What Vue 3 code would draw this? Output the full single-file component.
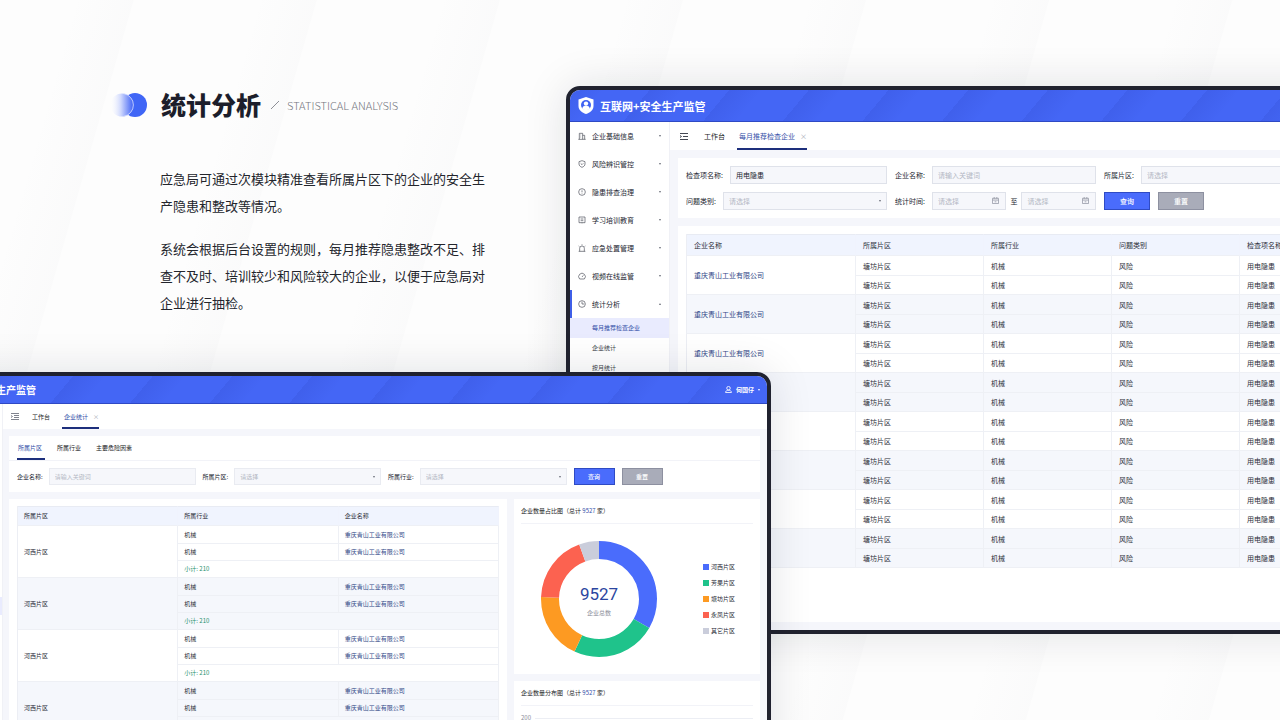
<script setup>
const intro = [
  '应急局可通过次模块精准查看所属片区下的企业的安全生产隐患和整改等情况。',
  '系统会根据后台设置的规则，每月推荐隐患整改不足、排查不及时、培训较少和风险较大的企业，以便于应急局对企业进行抽检。',
]

const menu = [
  { icon: 'building', label: '企业基础信息' },
  { icon: 'shield', label: '风险辨识管控' },
  { icon: 'alert', label: '隐患排查治理' },
  { icon: 'book', label: '学习培训教育' },
  { icon: 'siren', label: '应急处置管理' },
  { icon: 'gauge', label: '视频在线监管' },
  {
    icon: 'pie',
    label: '统计分析',
    open: true,
    children: ['每月推荐检查企业', '企业统计', '按月统计'],
  },
]

const company = '重庆青山工业有限公司'
const checkGroups = Array.from({ length: 8 }, (_, i) => ({
  company: i < 3 ? company : '',
  rows: [
    ['塘坊片区', '机械', '风险', '用电隐患'],
    ['塘坊片区', '机械', '风险', '用电隐患'],
  ],
}))
const areaGroups = Array.from({ length: 4 }, () => ({
  area: '河西片区',
  rows: ['机械', '机械'],
  total: 210,
}))

const areaTabs = ['所属片区', '所属行业', '主要危险因素']

const slices = [
  { label: '河西片区', color: '#4a6cfc', from: 0, to: 120 },
  { label: '芳果片区', color: '#1fc38b', from: 120, to: 205 },
  { label: '塘坊片区', color: '#fd9a22', from: 205, to: 272 },
  { label: '永凤片区', color: '#fc6250', from: 272, to: 340 },
  { label: '其它片区', color: '#cacddb', from: 340, to: 360 },
]
</script>

<template>
  <main class="stage">
    <section class="intro">
      <header class="intro-head">
        <svg class="mark" viewBox="0 0 38 24" aria-hidden="true">
          <defs>
            <linearGradient id="markFade" x1="0" x2="1">
              <stop offset="0" stop-color="#fff" stop-opacity="0.2" />
              <stop offset="0.45" stop-color="#cfd8fd" />
              <stop offset="1" stop-color="#3d60f5" />
            </linearGradient>
          </defs>
          <circle cx="25" cy="12" r="12" fill="#4066f6" />
          <circle cx="12" cy="12" r="11.5" fill="url(#markFade)" />
          <path d="M14 .7a11.5 11.5 0 0 1 0 22.6" fill="none" stroke="#dfe6ff" stroke-width=".8" />
        </svg>
        <h1>统计分析</h1>
        <svg class="slash" viewBox="0 0 8 8" aria-hidden="true"><path d="M0 8 8 0" /></svg>
        <span class="en">STATISTICAL ANALYSIS</span>
      </header>
      <p v-for="text in intro" :key="text">{{ text }}</p>
    </section>

    <section class="window back">
      <header class="bar">
        <svg class="logo" viewBox="0 0 16 17" aria-hidden="true">
          <path fill="#fff" d="M8 0 15.500 2.600V9c0 4-3.500 6.600-7.500 8C4 15.600.5 13 .5 9V2.600z" />
          <circle cx="8" cy="8" r="5" fill="#4062f2" />
          <circle cx="8" cy="6.600" r="2.200" fill="#fff" />
          <path fill="#fff" d="M4.200 11.500c.4-2 1.800-2.700 3.800-2.700s3.400.7 3.800 2.700C10.500 13.600 5.500 13.600 4.200 11.500z" />
        </svg>
        <strong>互联网+安全生产监管</strong>
      </header>
      <div class="body">
        <nav class="side">
          <template v-for="item in menu" :key="item.label">
            <button type="button" class="menu" :class="{ open: item.open }">
              <svg viewBox="0 0 12 12" aria-hidden="true">
                <g v-if="item.icon === 'building'"><path d="M2 11V2h5v9M7 5h3v6M.5 11h11M4 4v1M4 7v1" /></g>
                <g v-else-if="item.icon === 'shield'"><path d="M6 1l4.500 1.500V6c0 2.500-2 4-4.500 5-2.500-1-4.500-2.500-4.500-5V2.500zM4 5l2 2 2-2" /></g>
                <g v-else-if="item.icon === 'alert'"><circle cx="6" cy="6" r="5" /><path d="M6 3.500v3M6 8v.8" /></g>
                <g v-else-if="item.icon === 'book'"><path d="M1.500 1.500h9v8.500h-9zM4 4.500h4M4 7h4M6 10v1" /></g>
                <g v-else-if="item.icon === 'siren'"><path d="M2.500 11V6.500a3.500 3.500 0 0 1 7 0V11M1 11h10M6 .5v1.500M1 3l1.200 1M11 3 9.800 4" /></g>
                <g v-else-if="item.icon === 'gauge'"><path d="M2.500 10.500a5 5 0 1 1 7 0zM6 7.500 8 5" /></g>
                <g v-else><circle cx="6" cy="6" r="5" /><path d="M6 2.500V6h3.500" /></g>
              </svg>
              <span>{{ item.label }}</span>
              <i class="caret" :class="{ up: item.open }"></i>
            </button>
            <a
              v-for="(child, i) in item.children || []"
              :key="child"
              href="#"
              class="sub"
              :class="{ on: i === 0 }"
            >{{ child }}</a>
          </template>
        </nav>
        <div class="content">
          <nav class="tabs">
            <svg class="fold" viewBox="0 0 8 7" aria-hidden="true"><path d="M0 .5h8M3 3.500h5M0 6.500h8M0 2.500l1.500 1L0 4.500" /></svg>
            <a href="#">工作台</a>
            <a href="#" class="on">每月推荐检查企业<i class="x">×</i></a>
          </nav>
          <form class="panel filters" @submit.prevent>
            <div class="field">
              <label for="item-name">检查项名称:</label>
              <input id="item-name" value="用电隐患" />
            </div>
            <div class="field">
              <label for="ent-name">企业名称:</label>
              <input id="ent-name" placeholder="请输入关键词" />
            </div>
            <div class="field">
              <label for="area">所属片区:</label>
              <span class="pick"><select id="area"><option>请选择</option></select></span>
            </div>
            <div class="field first">
              <label for="kind">问题类别:</label>
              <span class="pick"><select id="kind"><option>请选择</option></select><i class="caret"></i></span>
            </div>
            <div class="field">
              <label for="date-from">统计时间:</label>
              <span class="date">
                <input id="date-from" placeholder="请选择" />
                <svg viewBox="0 0 8 8" aria-hidden="true"><path d="M.5 1.500h7v6h-7zM.5 3.500h7M2.500 0v2M5.500 0v2M3 5.500h2" /></svg>
              </span>
              <label for="date-to" class="to">至</label>
              <span class="date">
                <input id="date-to" placeholder="请选择" />
                <svg viewBox="0 0 8 8" aria-hidden="true"><path d="M.5 1.500h7v6h-7zM.5 3.500h7M2.500 0v2M5.500 0v2M3 5.500h2" /></svg>
              </span>
            </div>
            <div class="actions">
              <button type="submit" class="primary">查询</button>
              <button type="reset" class="plain">重置</button>
            </div>
          </form>
          <div class="panel sheet">
            <table>
              <colgroup><col class="c-name" /><col /><col /><col /><col class="c-rest" /></colgroup>
              <thead>
                <tr><th>企业名称</th><th>所属片区</th><th>所属行业</th><th>问题类别</th><th>检查项名称</th></tr>
              </thead>
              <tbody v-for="(g, gi) in checkGroups" :key="gi">
                <tr v-for="(row, ri) in g.rows" :key="ri">
                  <td v-if="ri === 0" rowspan="2"><a v-if="g.company" href="#">{{ g.company }}</a></td>
                  <td v-for="cell in row" :key="cell">{{ cell }}</td>
                </tr>
              </tbody>
            </table>
          </div>
        </div>
      </div>
    </section>

    <section class="window front">
      <header class="bar">
        <strong>互联网+安全生产监管</strong>
        <button type="button" class="user">
          <svg viewBox="0 0 8 8" aria-hidden="true"><circle cx="4" cy="2.500" r="2" /><path d="M.7 7.500c0-2 1.500-2.600 3.300-2.600s3.300.6 3.300 2.600z" /></svg>
          何国仔
          <i class="caret"></i>
        </button>
      </header>
      <div class="body">
        <div class="side"><span class="here"></span></div>
        <div class="content">
          <nav class="tabs">
            <svg class="fold" viewBox="0 0 8 7" aria-hidden="true"><path d="M0 .5h8M3 2.500h5M3 4.500h5M0 6.500h8M0 2.500l1.500 1L0 4.500" /></svg>
            <a href="#">工作台</a>
            <a href="#" class="on">企业统计<i class="x">×</i></a>
          </nav>
          <form class="panel search" @submit.prevent>
            <div class="inner-tabs">
              <a v-for="(t, i) in areaTabs" :key="t" href="#" :class="{ on: i === 0 }">{{ t }}</a>
            </div>
            <div class="filters">
              <div class="field">
                <label for="f-name">企业名称:</label>
                <input id="f-name" placeholder="请输入关键词" />
              </div>
              <div class="field">
                <label for="f-area">所属片区:</label>
                <span class="pick"><select id="f-area"><option>请选择</option></select><i class="caret"></i></span>
              </div>
              <div class="field">
                <label for="f-trade">所属行业:</label>
                <span class="pick"><select id="f-trade"><option>请选择</option></select><i class="caret"></i></span>
              </div>
              <div class="actions">
                <button type="submit" class="primary">查询</button>
                <button type="reset" class="plain">重置</button>
              </div>
            </div>
          </form>
          <div class="split">
            <div class="panel sheet">
              <table>
                <thead>
                  <tr><th>所属片区</th><th>所属行业</th><th>企业名称</th></tr>
                </thead>
                <tbody v-for="(g, gi) in areaGroups" :key="gi">
                  <tr v-for="(row, ri) in g.rows" :key="ri">
                    <td v-if="ri === 0" rowspan="3">{{ g.area }}</td>
                    <td>{{ row }}</td>
                    <td><a href="#">{{ company }}</a></td>
                  </tr>
                  <tr><td colspan="2" class="sum">小计: {{ g.total }}</td></tr>
                </tbody>
              </table>
            </div>
            <div class="charts">
              <article class="panel card">
                <h2>企业数量占比图（总计 <b>9527</b> 家）</h2>
                <div class="share">
                  <div class="donut">
                    <svg viewBox="0 0 116 116" aria-hidden="true">
                      <circle
                        v-for="s in slices"
                        :key="s.label"
                        cx="58"
                        cy="58"
                        r="49"
                        pathLength="360"
                        :stroke="s.color"
                        :stroke-dasharray="`${s.to - s.from} 360`"
                        :stroke-dashoffset="-s.from"
                      />
                    </svg>
                    <div class="total"><b>9527</b><span>企业总数</span></div>
                  </div>
                  <ul>
                    <li v-for="s in slices" :key="s.label">
                      <i :style="{ background: s.color }"></i>{{ s.label }}
                    </li>
                  </ul>
                </div>
              </article>
              <article class="panel card">
                <h2>企业数量分布图（总计 <b>9527</b> 家）</h2>
                <div class="axis"><span>200</span><hr /></div>
              </article>
            </div>
          </div>
        </div>
      </div>
    </section>
  </main>
</template>

<style>
body {
  margin: 0;
}
</style>

<style scoped>
* {
  box-sizing: border-box;
}
.stage {
  position: relative;
  min-height: 100vh;
  overflow: hidden;
  background:
    repeating-linear-gradient(106deg, rgba(120, 124, 140, 0) 0 70px, rgba(120, 124, 140, 0.02) 128px, rgba(120, 124, 140, 0) 129px 176px),
    #fdfdfd;
  font-family: "Noto Sans CJK SC", sans-serif;
  color: #22252f;
}
a {
  color: inherit;
  text-decoration: none;
}
i {
  font-style: normal;
}
button,
input,
select {
  font: inherit;
  margin: 0;
}

/* intro copy */
.intro {
  padding: 88px 0 0 110px;
}
.intro-head {
  display: flex;
  align-items: center;
  height: 34px;
  margin-bottom: 43px;
}
.mark {
  width: 38px;
  height: 24px;
  margin-right: 13px;
}
h1 {
  margin: 0;
  padding-bottom: 3px;
  font-size: 25px;
  line-height: 34px;
  font-weight: 900;
  color: #1c1e2b;
}
.slash {
  width: 8px;
  height: 8px;
  margin: 0 8px 0 10px;
  stroke: #8d8f96;
}
.en {
  font-size: 11px;
  line-height: 16px;
  font-weight: 300;
  color: #75777f;
}
.intro p {
  width: 334px;
  margin: 0 0 16px 50px;
  font-size: 13px;
  line-height: 27px;
  color: #23252c;
}

/* windows */
.window {
  position: absolute;
  display: flex;
  flex-direction: column;
  overflow: hidden;
  border: 4px solid #20222f;
  border-radius: 14px;
  background: #f5f6fb;
  box-shadow: 0 0 44px rgba(20, 22, 40, 0.12);
}
.back {
  top: 86px;
  left: 566px;
  right: -254px;
  font-size: 7px;
  line-height: 10px;
}
.front {
  top: 372px;
  left: -90px;
  right: 509px;
  bottom: -40px;
  font-size: 6px;
  line-height: 10px;
}
.bar {
  flex: none;
  display: flex;
  align-items: center;
  height: 32px;
  padding: 0 8px;
  border-bottom: 1px solid #2f49c4;
  background:
    repeating-linear-gradient(130deg, rgba(18, 32, 140, 0.09) 0, rgba(18, 32, 140, 0) 26px 61px),
    #4466f5;
  color: #fff;
  font-size: 11px;
}
.front .bar {
  height: 28px;
  padding: 0 7px 0 26px;
  justify-content: space-between;
  font-size: 10px;
}
.logo {
  width: 16px;
  height: 17px;
  margin-right: 6px;
}
.user {
  display: flex;
  align-items: center;
  padding: 0;
  border: 0;
  background: none;
  color: #fff;
  font-size: 6px;
  font-weight: 700;
  line-height: 10px;
}
.user svg {
  width: 7px;
  height: 7px;
  margin-right: 4px;
  fill: none;
  stroke: #fff;
}
.user .caret {
  margin-left: 4px;
}
.caret {
  flex: none;
  border: 1px solid transparent;
  border-top: 2px solid currentColor;
  border-bottom-width: 0;
}
.caret.up {
  border-top-width: 0;
  border-bottom: 2px solid currentColor;
}
.body {
  flex: 1;
  display: flex;
}
.side {
  flex: none;
  width: 100px;
  border-right: 1px solid #f0f1f6;
  background: #fff;
}
.front .side {
  width: 89px;
}
.here {
  display: block;
  height: 18px;
  margin-top: 193px;
  background: #e9ebfe;
}
.menu {
  display: flex;
  align-items: center;
  width: 100%;
  height: 28px;
  padding: 0 8px;
  border: 0;
  background: none;
  color: #22252f;
  line-height: 10px;
  text-align: left;
}
.menu.open {
  box-shadow: inset 2px 0 #3f5fe8;
}
.menu svg {
  width: 8px;
  height: 8px;
  margin-right: 6px;
  fill: none;
  stroke: #4a4d58;
}
.menu span {
  flex: 1;
}
.menu .caret {
  color: #6a6d78;
}
.sub {
  display: block;
  padding-left: 22px;
  font-size: 6px;
  line-height: 20px;
  color: #3c3f4a;
}
.sub.on {
  background: #e9ebfe;
  color: #3450a8;
}
.content {
  flex: 1;
  min-width: 0;
  display: flex;
  flex-direction: column;
}
.tabs {
  display: flex;
  gap: 12px;
  height: 28px;
  padding: 0 10px;
  background: #fff;
}
.front .tabs {
  padding: 0 8px;
  height: 25px;
}
.fold {
  align-self: center;
  width: 8px;
  height: 7px;
  margin-right: 3px;
  fill: none;
  stroke: #454853;
}
.front .fold {
  margin-right: 0;
  stroke: #80838e;
}
.tabs a,
.inner-tabs a {
  display: flex;
  align-items: center;
  border-bottom: 2px solid transparent;
  padding-top: 2px;
}
.tabs .on {
  gap: 5px;
  padding-left: 2px;
}
.tabs .on,
.inner-tabs .on {
  border-bottom-color: #1d2f7c;
  color: #3450a8;
}
.x {
  color: #a3a6b2;
}
.tabs a:nth-of-type(1) {
  margin-left: 1px;
  color: #191b24;
}
.panel {
  background: #fff;
}
.content > .panel {
  margin: 8px 8px 0;
}
.front .content > .panel {
  margin: 7px 7px 0 6px;
}
.filters {
  display: grid;
  grid-template-columns: repeat(4, 1fr);
  gap: 8px;
  padding: 8px;
}
.search .filters {
  gap: 7px;
  padding: 7px 8px;
}
.field {
  display: flex;
  align-items: center;
  gap: 7px;
  min-width: 0;
}
.front .field {
  gap: 6px;
}
.field.first {
  grid-column: 1;
}
.field > input,
.pick,
.date {
  flex: 1;
  min-width: 0;
}
.pick,
.date {
  display: flex;
  position: relative;
}
.to {
  margin: 0 -3px;
}
input,
select {
  width: 100%;
  height: 18px;
  padding: 0 5px;
  border: 1px solid #dfe2ea;
  border-radius: 0;
  background: #f6f7fb;
  color: #22252f;
  appearance: none;
  outline: 0;
}
.front input,
.front select {
  height: 17px;
  border-color: #e9ebf1;
}
select,
input::placeholder {
  color: #b4b8c4;
  opacity: 1;
}
.pick .caret {
  position: absolute;
  right: 6px;
  top: 8px;
  color: #6a6d78;
}
.date svg {
  position: absolute;
  right: 7px;
  top: 5px;
  width: 7px;
  height: 7px;
  fill: none;
  stroke: #9c9fab;
}
.actions {
  display: flex;
  gap: 8px;
}
.front .actions {
  gap: 7px;
}
.actions button {
  width: 46px;
  height: 18px;
  padding: 0;
  border: 1px solid #2f4bc4;
  background: #4a6cfc;
  color: #fff;
  font-weight: 500;
  line-height: 10px;
}
.front .actions button {
  width: 41px;
  height: 17px;
}
.actions .plain {
  border-color: #8d90a0;
  background: #a9acb9;
}

/* tables */
.sheet {
  padding: 8px;
}
.front .sheet {
  padding: 7px 8px;
}
.back .sheet {
  min-height: 396px;
  margin-bottom: 8px;
}
table {
  width: 100%;
  table-layout: fixed;
  border-spacing: 0;
  border: 1px solid #eceef4;
  border-width: 0 0 0 1px;
}
col {
  width: 128px;
}
.c-name {
  width: 169px;
}
.c-rest {
  width: auto;
}
th,
td {
  height: 19px;
  padding: 0 7px;
  border: 1px solid #eef0f5;
  border-width: 0 1px 1px 0;
  text-align: left;
  font-weight: 400;
  color: #2b2e39;
}
.back td {
  height: 20px;
}
.back tr:nth-child(2) td {
  height: 19px;
}
th {
  height: 22px;
  border-right-color: #f0f3fd;
  border-top: 1px solid #e8ebf3;
  background: #f0f4fe;
}
.front th {
  height: 20px;
  padding: 0 6px;
}
.front td {
  height: 17px;
  padding: 0 6px;
}
.front tr:first-child td:not([rowspan]) {
  height: 18px;
}
tbody:nth-of-type(even) td {
  background: #f5f7fc;
}
td a {
  color: #2f4786;
}
td.sum {
  color: #1f8f6c;
}

/* statistics window */
.inner-tabs {
  display: flex;
  gap: 11px;
  height: 25px;
  padding: 0 8px;
  border-bottom: 1px solid #f2f3f8;
  color: #191b24;
}
.inner-tabs a {
  padding-left: 1px;
  padding-right: 3px;
}
.split {
  flex: 1;
  display: grid;
  grid-template-columns: 498fr 246fr;
  gap: 7px;
  padding: 7px 7px 0 6px;
}
.charts {
  display: flex;
  flex-direction: column;
  gap: 7px;
}
.card {
  min-height: 175px;
}
h2 {
  margin: 0 7px;
  font-size: 6px;
  line-height: 24px;
  font-weight: 400;
  border-bottom: 1px solid #f2f3f8;
  color: #191b24;
}
h2 b {
  font-weight: 400;
  color: #3450a8;
}
.share {
  display: flex;
  align-items: center;
  justify-content: space-between;
  padding: 17px 25px 16px 27px;
}
.donut {
  position: relative;
  width: 116px;
  height: 116px;
}
.donut svg {
  display: block;
  transform: rotate(-90deg);
  fill: none;
  stroke-width: 18;
}
.total {
  position: absolute;
  inset: 4px 0 0;
  display: flex;
  flex-direction: column;
  align-items: center;
  justify-content: center;
  gap: 4px;
  color: #8b8e9a;
}
.total b {
  font-family: Roboto, sans-serif;
  font-size: 17px;
  line-height: 20px;
  font-weight: 400;
  color: #2b46a0;
}
ul {
  margin: 0;
  padding: 0;
  list-style: none;
}
li {
  display: flex;
  align-items: center;
  gap: 2px;
  height: 16px;
  color: #2b2e39;
}
li i {
  width: 6px;
  height: 6px;
}
.axis {
  display: flex;
  align-items: center;
  gap: 4px;
  padding: 7px 7px 0;
  color: #8b8e9a;
}
.axis hr {
  flex: 1;
  height: 1px;
  margin: 0;
  border: 0;
  background: #eceef4;
}
</style>
